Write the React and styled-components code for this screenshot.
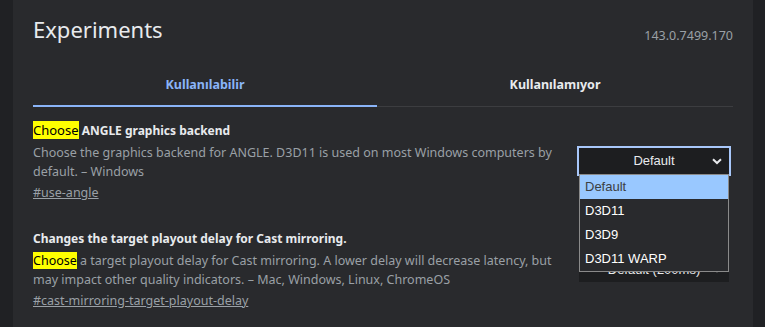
import React from "react";
import styled, { createGlobalStyle } from "styled-components";

const Global = createGlobalStyle`
  html, body { margin: 0; padding: 0; background: #202124; }
  body { font-family: "Noto Sans", "Open Sans", sans-serif; color: #e8eaed; }
  #root { height: 327px; overflow: hidden; }
`;

const Page = styled.div`
  display: flex;
  height: 327px;
  padding: 0 12px 0 13px;
`;

const Panel = styled.main`
  flex: 1;
  background: #292a2d;
  padding: 0 20px;
  display: flex;
  flex-direction: column;
`;

const Header = styled.header`
  display: flex;
  justify-content: space-between;
  align-items: flex-end;
  padding-top: 13px;
`;

const Title = styled.h1`
  margin: 0;
  font-size: 22px;
  font-weight: 400;
  line-height: 32px;
  color: #e8eaed;
`;

const Version = styled.span`
  font-size: 12.5px;
  color: #9aa0a6;
  line-height: 18px;
`;

const Tabs = styled.nav`
  display: flex;
  margin-top: 16px;
  border-bottom: 1px solid #3c3d40;
`;

const Tab = styled.div`
  flex: 1 1 auto;
  height: 46px;
  display: flex;
  align-items: center;
  justify-content: center;
  font-size: 12.5px;
  font-weight: 700;
  color: ${(p) => (p.$active ? "#8ab4f8" : "#e8eaed")};
  box-shadow: ${(p) => (p.$active ? "inset 0 -2px 0 #8ab4f8" : "none")};
  margin-bottom: -1px;
`;

const List = styled.section`
  display: flex;
  flex-direction: column;
  gap: 27px;
  padding-top: 14px;
`;

const Experiment = styled.article`
  display: flex;
  align-items: center;
  justify-content: space-between;
`;

const Info = styled.div`
  width: 530px;
  flex-shrink: 0;
  display: flex;
  flex-direction: column;
`;

const Name = styled.h2`
  margin: 0;
  font-size: 12px;
  font-weight: 700;
  line-height: 18px;
  color: #e8eaed;
`;

const Mark = styled.mark`
  background: #ffff00;
  color: #000;
  font-weight: 400;
  font-size: ${(p) => p.$size || "inherit"};
`;

const Desc = styled.p`
  margin: 3px 0 0;
  font-size: 12.5px;
  line-height: 19px;
  color: #9aa0a6;
`;

const Link = styled.a`
  margin-top: 2px;
  font-size: 12.5px;
  line-height: 20px;
  color: #9aa0a6;
  text-decoration: underline;
  align-self: flex-start;
`;

const SelectWrap = styled.div`
  position: relative;
  flex-shrink: 0;
  width: 150px;
  margin: 0 4px 3px 0;
`;

const SelectBox = styled.div`
  height: 26px;
  background: #1d1e20;
  display: flex;
  align-items: center;
  justify-content: center;
  font-family: "Liberation Sans", Arial, sans-serif;
  font-size: 13px;
  color: #e8eaed;
  outline: ${(p) => (p.$focused ? "2px solid #a8c7fa" : "none")};
  position: relative;
`;

const Chevron = styled.svg`
  position: absolute;
  right: 7px;
  top: 50%;
  margin-top: -3px;
`;

const Popup = styled.ul`
  position: absolute;
  top: 100%;
  left: 0;
  width: 150px;
  box-sizing: border-box;
  margin: 0;
  padding: 0;
  list-style: none;
  background: #292a2d;
  border: 1px solid #8a8a8a;
  z-index: 2;
`;

const Option = styled.li`
  height: 24px;
  display: flex;
  align-items: center;
  padding-left: 5px;
  font-family: "Liberation Sans", Arial, sans-serif;
  font-size: 13px;
  color: ${(p) => (p.$selected ? "#3c4043" : "#ffffff")};
  background: ${(p) => (p.$selected ? "#99c8ff" : "transparent")};
`;

function Select({ value, focused, options }) {
  return (
    <SelectWrap>
      <SelectBox $focused={focused}>
        {value}
        <Chevron width="10" height="7" viewBox="0 0 10 7">
          <path d="M1 1.2 L5 5 L9 1.2" stroke="#e8eaed" strokeWidth="2" fill="none" />
        </Chevron>
      </SelectBox>
      {options && (
        <Popup>
          {options.map((o, i) => (
            <Option key={o} $selected={i === 0}>{o}</Option>
          ))}
        </Popup>
      )}
    </SelectWrap>
  );
}

export default function App() {
  return (
    <>
      <Global />
      <Page>
        <Panel>
          <Header>
            <Title>Experiments</Title>
            <Version>143.0.7499.170</Version>
          </Header>
          <Tabs>
            <Tab $active>Kullanılabilir</Tab>
            <Tab>Kullanılamıyor</Tab>
          </Tabs>
          <List>
            <Experiment>
              <Info>
                <Name><Mark $size="13px">Choose</Mark> ANGLE graphics backend</Name>
                <Desc>Choose the graphics backend for ANGLE. D3D11 is used on most Windows computers by default. – Windows</Desc>
                <Link href="#use-angle">#use-angle</Link>
              </Info>
              <Select value="Default" focused options={["Default", "D3D11", "D3D9", "D3D11 WARP"]} />
            </Experiment>
            <Experiment>
              <Info>
                <Name>Changes the target playout delay for Cast mirroring.</Name>
                <Desc><Mark>Choose</Mark> a target playout delay for Cast mirroring. A lower delay will decrease latency, but may impact other quality indicators. – Mac, Windows, Linux, ChromeOS</Desc>
                <Link href="#cast-mirroring-target-playout-delay">#cast-mirroring-target-playout-delay</Link>
              </Info>
              <Select value="Default (200ms)" />
            </Experiment>
          </List>
        </Panel>
      </Page>
    </>
  );
}
